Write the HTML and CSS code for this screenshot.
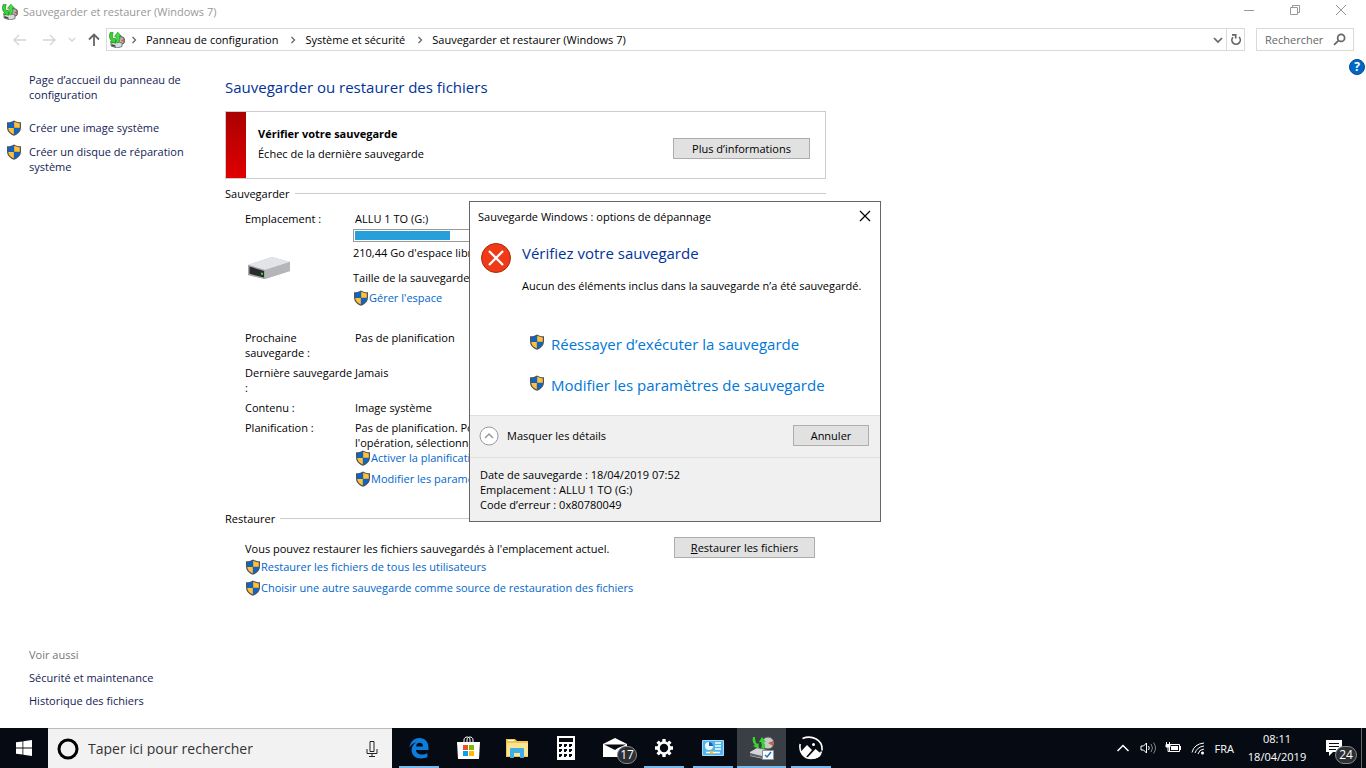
FILE: index.html
```html
<!DOCTYPE html>
<html lang="fr">
<head>
<meta charset="utf-8">
<title>Sauvegarder et restaurer (Windows 7)</title>
<link rel="stylesheet" href="styles.css">
</head>
<body>
<svg class="defs" aria-hidden="true">
  <symbol id="shield" viewBox="0 0 16 16">
    <path d="M8 .4C6 1.7 3.600 2.200 1 2.300v4.900C1 11.400 4 14.200 8 15.800c4-1.600 7-4.400 7-8.600V2.300C12.400 2.200 10 1.700 8 .4z" fill="#4f5357"/>
    <path d="M7.800 1.800C6.200 2.700 4.300 3.200 2.200 3.400v4.400h5.600z" fill="#0b66cb"/>
    <path d="M8.200 1.800c1.600.9 3.500 1.400 5.600 1.600v4.400H8.200z" fill="#ffc03c"/>
    <path d="M2.200 8.100c.3 3 2.600 5.200 5.600 6.500V8.100z" fill="#ffc03c"/>
    <path d="M13.800 8.100c-.3 3-2.600 5.200-5.600 6.500V8.100z" fill="#0b66cb"/>
  </symbol>
  <symbol id="backup" viewBox="0 0 16 16">
    <circle cx="11.800" cy="8.500" r="3.900" fill="#b4b8bb" stroke="#505457"/>
    <path d="M12 8.500l3.200-2v4z" fill="#d8583c"/>
    <path d="M2 11l5-2 6 2v3.500L8 16l-6-2z" fill="#d9dcde" stroke="#5d6164" stroke-width=".8"/>
    <path d="M2.500 12l4 1.500V15l-4-1.200z" fill="#3c4144"/>
    <path d="M1.200.5C-.3 4 .6 7 2.500 8.800L1 10.200l6 1-.8-5.600-1.500 1.500C3.400 5.700 3.200 3 4.200.6z" fill="#35d52d" stroke="#15791a" stroke-width=".6"/>
    <path d="M9 11c2-2.300 2.200-5 1.500-7h1.800L8.800.3 5.500 4.300h1.900c.7 2.200.4 4-.6 5.500z" fill="#43e33a" stroke="#15791a" stroke-width=".6"/>
  </symbol>
  <symbol id="crumb" viewBox="0 0 6 8"><path d="M1.500 1l3 3-3 3" fill="none" stroke="#666" stroke-width="1.300"/></symbol>
</svg>

<header class="titlebar">
  <svg class="i16"><use href="#backup"/></svg>
  <span class="title">Sauvegarder et restaurer (Windows 7)</span>
  <button class="winbtn" aria-label="Réduire"><svg viewBox="0 0 12 12"><path d="M1 6.500h10"/></svg></button>
  <button class="winbtn" aria-label="Restaurer"><svg viewBox="0 0 12 12"><path d="M1.500 3.500h7v7h-7zM3.500 3.500v-2h7v7h-2"/></svg></button>
  <button class="winbtn" aria-label="Fermer"><svg viewBox="0 0 12 12"><path d="M1 1l10 10M11 1L1 11"/></svg></button>
</header>

<nav class="navbar">
  <button class="nb" aria-label="Précédent"><svg class="i16 pale" viewBox="0 0 16 16"><path d="M14 8H2M7 3L2 8l5 5"/></svg></button>
  <button class="nb" aria-label="Suivant"><svg class="i16 pale" viewBox="0 0 16 16"><path d="M2 8h12M9 3l5 5-5 5"/></svg></button>
  <button class="nb small" aria-label="Pages récentes"><svg class="i16 pale" viewBox="0 0 16 16"><path d="M5 6l3 3 3-3"/></svg></button>
  <button class="nb up" aria-label="Dossier parent"><svg class="i16" viewBox="0 0 16 16"><path d="M8 14V2.500M3 7.500l5-5 5 5"/></svg></button>
  <div class="address">
    <svg class="i16"><use href="#backup"/></svg>
    <svg class="sep first"><use href="#crumb"/></svg><a href="#">Panneau de configuration</a>
    <svg class="sep"><use href="#crumb"/></svg><a href="#">Système et sécurité</a>
    <svg class="sep"><use href="#crumb"/></svg><a href="#">Sauvegarder et restaurer (Windows 7)</a>
    <button class="drop" aria-label="Historique"><svg viewBox="0 0 12 12"><path d="M2 4l4 4 4-4"/></svg></button>
    <button class="refresh" aria-label="Actualiser"><svg viewBox="0 0 12 12"><path d="M3 3.200A4.200 4.200 0 1 0 9 3M2 .8h3.700v3.700"/></svg></button>
  </div>
  <label class="search"><input type="text" placeholder="Rechercher" aria-label="Rechercher"><svg viewBox="0 0 12 12"><circle cx="7.500" cy="4.500" r="3.200"/><path d="M5 7L1 11"/></svg></label>
</nav>

<div class="content">
  <aside class="side">
    <a class="home" href="#">Page d’accueil du panneau de configuration</a>
    <a class="task" href="#"><svg class="i16"><use href="#shield"/></svg><span>Créer une image système</span></a>
    <a class="task" href="#"><svg class="i16"><use href="#shield"/></svg><span>Créer un disque de réparation<br>système</span></a>
    <div class="also"><span>Voir aussi</span><a href="#">Sécurité et maintenance</a><a href="#">Historique des fichiers</a></div>
  </aside>

  <main class="main">
    <h1>Sauvegarder ou restaurer des fichiers</h1>
    <section class="alert">
      <div class="alert-text"><strong>Vérifier votre sauvegarde</strong><span>Échec de la dernière sauvegarde</span></div>
      <button class="btn more">Plus d’informations</button>
    </section>

    <h2>Sauvegarder</h2>
    <div class="row location">
      <div class="label">Emplacement :
        <svg class="drive" viewBox="0 0 44 24">
          <path d="M1 9L25 1l18 5v9L18 23 1 19z" fill="#b9babd"/>
          <path d="M1 9L25 1l18 5-25 8z" fill="#e3e4e8"/>
          <path d="M18 14l25-8v9l-25 8z" fill="#b5b6b9"/>
          <path d="M1 9l17 5v9L1 19z" fill="#a4a6a8"/>
          <path d="M2.500 10.500L17 15v6.500L2.500 17.800z" fill="#292c2e"/>
          <path d="M14 16.500l2 .5v2l-2-.4z" fill="#35e52d"/>
        </svg>
      </div>
      <div class="space">
        <span class="drive-name">ALLU 1 TO (G:)</span>
        <div class="meter"><div class="meter-fill"></div></div>
        <span>210,44 Go d'espace libre</span>
        <span class="size">Taille de la sauvegarde</span>
        <a class="link" href="#"><svg class="i16"><use href="#shield"/></svg>Gérer l'espace</a>
      </div>
    </div>
    <div class="row"><div class="label">Prochaine<br>sauvegarde :</div><div>Pas de planification</div></div>
    <div class="row"><div class="label">Dernière sauvegarde<br>:</div><div>Jamais</div></div>
    <div class="row"><div class="label">Contenu :</div><div>Image système</div></div>
    <div class="row plan"><div class="label">Planification :</div>
      <div>Pas de planification. Pour<br>l'opération, sélectionnez
        <a class="link" href="#"><svg class="i16"><use href="#shield"/></svg>Activer la planification</a>
        <a class="link" href="#"><svg class="i16"><use href="#shield"/></svg>Modifier les paramètres</a>
      </div>
    </div>

    <h2>Restaurer</h2>
    <div class="restore">
      <div class="restore-text">
        <span>Vous pouvez restaurer les fichiers sauvegardés à l'emplacement actuel.</span>
        <a class="link" href="#"><svg class="i16"><use href="#shield"/></svg>Restaurer les fichiers de tous les utilisateurs</a>
        <a class="link" href="#"><svg class="i16"><use href="#shield"/></svg>Choisir une autre sauvegarde comme source de restauration des fichiers</a>
      </div>
      <button class="btn restore-btn"><u>R</u>estaurer les fichiers</button>
    </div>
  </main>
  <button class="help" aria-label="Aide">?</button>
</div>

<section class="dialog" role="dialog" aria-labelledby="dlg-title">
  <div class="dlg-head"><span id="dlg-title">Sauvegarde Windows : options de dépannage</span>
    <button aria-label="Fermer"><svg viewBox="0 0 12 12"><path d="M1 1l10 10M11 1L1 11"/></svg></button></div>
  <div class="dlg-body">
    <svg class="error" viewBox="0 0 30 30"><circle cx="15" cy="15" r="14.500" fill="#f03a17" stroke="#a82a12"/><path d="M8 8l14 14M22 8L8 22" stroke="#fff" stroke-width="2.300"/></svg>
    <div class="dlg-text">
      <h2>Vérifiez votre sauvegarde</h2>
      <p>Aucun des éléments inclus dans la sauvegarde n’a été sauvegardé.</p>
      <a href="#"><svg class="i16"><use href="#shield"/></svg>Réessayer d’exécuter la sauvegarde</a>
      <a href="#"><svg class="i16"><use href="#shield"/></svg>Modifier les paramètres de sauvegarde</a>
    </div>
  </div>
  <div class="dlg-foot">
    <button class="toggle"><svg viewBox="0 0 20 20"><circle cx="10" cy="10" r="9" fill="#fff" stroke="#999"/><path d="M6 12l4-4 4 4" fill="none" stroke="#999" stroke-width="1.500"/></svg>Masquer les détails</button>
    <button class="btn cancel">Annuler</button>
  </div>
  <div class="dlg-details">Date de sauvegarde : 18/04/2019 07:52<br>Emplacement : ALLU 1 TO (G:)<br>Code d’erreur : 0x80780049</div>
</section>

<footer class="taskbar">
  <button class="start" aria-label="Démarrer"><svg viewBox="0 0 16 16"><path d="M0 2.300L6.500 1.400v6.200H0zM7.300 1.300L16 0v7.600H7.300zM0 8.400h6.500v6.200L0 13.700zM7.300 8.400H16V16l-8.700-1.300z" fill="#fff"/></svg></button>
  <label class="cortana">
    <svg class="ring" viewBox="0 0 22 22"><circle cx="11" cy="11" r="9" fill="none" stroke="#000" stroke-width="3"/></svg>
    <input type="text" placeholder="Taper ici pour rechercher" aria-label="Taper ici pour rechercher">
    <svg class="mic" viewBox="0 0 12 16"><path d="M4 .5h4v10H4zM1 8v4.500h10V8M6 12.500v3M3 15.500h6" fill="none" stroke="#222"/></svg>
  </label>
  <div class="apps">
    <button class="app run" aria-label="Edge"><svg viewBox="0 0 24 24"><path d="M2.500 11.500C3.200 6 7 2 12.200 2 18 2 21.500 6 21.500 11.500V14H9c.2 3 2.800 4.500 5.800 4.500 2.200 0 4.100-.7 5.600-1.600v4.200C18.600 22.200 16.300 22.500 14 22.500c-5.600 0-9.400-3.500-9.400-8.500 0-3.300 1.800-6 4.600-7.500C6.400 6.800 4.200 8.800 2.500 11.500zM9 10.500h7c0-2.300-1.100-3.800-3.400-3.800-2.100 0-3.400 1.600-3.600 3.800z" fill="#0c7ddb"/></svg></button>
    <button class="app" aria-label="Store"><svg viewBox="0 0 24 24"><path d="M8 7V4c0-4 6-4 6 0v3M11 7V4c0-4 6-4 6 0v3" fill="none" stroke="#fff"/><path d="M1 6h23l-1 17H2z" fill="#fff"/><path d="M7 9h5v5H7z" fill="#f25022"/><path d="M13 9h5v5h-5z" fill="#7fba00"/><path d="M7 15h5v5H7z" fill="#00a4ef"/><path d="M13 15h5v5h-5z" fill="#ffb900"/></svg></button>
    <button class="app" aria-label="Explorateur"><svg viewBox="0 0 24 24"><path d="M1 3h9l2 2h11v16H1z" fill="#f1c44e"/><path d="M2 7h21v13H2z" fill="#ffe394"/><path d="M3 4h6v1H3z" fill="#fff"/><path d="M5 22v-9q0-1 1-1h12q1 0 1 1v9h-4v-5H9v5z" fill="#3daee6"/></svg></button>
    <button class="app" aria-label="Calculatrice"><svg viewBox="0 0 24 24"><path d="M3 0h18v24H3z" fill="#fff"/><path d="M5 2h14v4H5zM5 8h3v2H7v1H5zM10 8h3v2h-1v1h-2zM15 8h3v2h-1v1h-2zM5 13h3v2H7v1H5zM10 13h3v2h-1v1h-2zM15 13h3v2h-1v1h-2zM5 18h3v2H7v1H5zM10 18h3v2h-1v1h-2zM15 18h3v2h-1v1h-2z" fill="#060b13"/></svg></button>
    <button class="app mail" aria-label="Courrier"><svg viewBox="0 0 24 24"><path d="M0 8l12-6 12 6v13H0z" fill="#fff"/><path d="M1 8.500h22L15 12l-3 2z" fill="#060b13"/></svg><span class="badge">17</span></button>
    <button class="app run" aria-label="Paramètres"><svg viewBox="0 0 24 24" fill="none" stroke="#fff"><circle cx="12" cy="12" r="5.500" stroke-width="2.600"/><path d="M12 3v3M12 18v3M3 12h3M18 12h3M5.600 5.600l2 2M16.400 16.400l2 2M5.600 18.400l2-2M16.400 7.600l2-2" stroke-width="3.400"/></svg></button>
    <button class="app run" aria-label="Panneau de configuration"><svg viewBox="0 0 24 24"><path d="M1.500 4.500h21v15h-21z" fill="#4eb5ed" stroke="#a7dcf8"/><circle cx="8" cy="10" r="4" fill="#eef8fe"/><path d="M8 10V6a4 4 0 0 1 4 4z" fill="#1669b0"/><path d="M14 7h6M14 10h6M14 13h6M5 16.500h14" stroke="#fff" stroke-width="1.500"/><path d="M9 15h3v3H9z" fill="#ffb52c"/></svg></button>
    <button class="app run active" aria-label="Sauvegarder et restaurer"><svg viewBox="0 0 24 24"><circle cx="18" cy="7" r="6" fill="#c7cacd" stroke="#595d60"/><path d="M18 7l5-2v5z" fill="#d8583c"/><path d="M0 16l7-4 16 3v5l-9 3-14-3z" fill="#d2d5d7"/><path d="M0 17l12 3v2L0 19.500z" fill="#5c6064"/><path d="M3 1c-1 4 0 6 2 8l-2 1 6 3-.5-6-1.500 1C5.500 6 5 4 5 1z" fill="#35d52d"/><path d="M14 13c2-2 1-5 0-7h2l-4-5-3 5h2c1 3 1 4 0 6z" fill="#35d52d"/><path d="M12.500 14.500h11v9h-11z" fill="#f7f9fb" stroke="#8b9298"/><path d="M15 19l2 2 4-5" fill="none" stroke="#2075bd" stroke-width="1.500"/></svg></button>
    <button class="app run" aria-label="Photos"><svg viewBox="0 0 24 24"><path d="M3.500 2.500C13-1.500 24 4 23 14.500M1.200 8C-.5 16 5 22.500 12 22.500c5 0 9-2.500 10.500-7" fill="none" stroke="#fff" stroke-width="1.600"/><path d="M1.500 16L8 9l5 5-6 7c-2.500-1-4.500-2.500-5.500-5z" fill="#fff"/><path d="M8.500 21.500l8-8.500 6 5c-3 5-9 6-14 3.500z" fill="#fff"/><circle cx="14.500" cy="8.500" r="1.500" fill="#fff"/></svg></button>
  </div>
  <div class="tray">
    <svg class="i16 bold" viewBox="0 0 16 16"><path d="M2.500 11L8 5.500l5.500 5.500"/></svg>
    <svg class="i16" viewBox="0 0 16 16"><path d="M1 6h2.500l3-3v10l-3-3H1z"/><path d="M8.500 6q1.500 2 0 4"/><path d="M11 4q3 4 0 8M13.500 2.500q4 5.500 0 11" opacity=".5"/></svg>
    <svg class="i16" viewBox="0 0 16 16"><path d="M4.500 4.500h10v7h-10z"/><path d="M6 6h7v4H6zM14.500 6H16v4h-1.500z" fill="#fff" stroke="none"/><path d="M1 4.500h4v2.500H1z" fill="#fff"/><path d="M1.500 2v2M4.500 2v2M3 7v4.500h1.500"/></svg>
    <svg class="i16" viewBox="0 0 16 16"><path d="M2 12.500Q4 4 14 3M5 13q2-6 9-7M8 14q1-4.500 6-5"/><circle cx="12.500" cy="13" r="1.500" fill="#fff" stroke="none"/></svg>
    <span>FRA</span>
    <time>08:11<br>18/04/2019</time>
    <button class="notif" aria-label="Notifications"><svg viewBox="0 0 18 18"><path d="M1 1h16v12H8l-4 4v-4H1z" fill="#fff"/><path d="M4 4.500h10M4 7.500h10M4 10.500h7" stroke="#060b13"/></svg><span class="badge">24</span></button>
  </div>
</footer>
</body>
</html>
```
FILE: styles.css
```css
* { box-sizing: border-box; }
body {
  margin: 0;
  min-height: 100vh;
  display: flex;
  flex-direction: column;
  position: relative;
  background: #fff;
  color: #000;
  font: 11px/15px "Open Sans", "Noto Sans", sans-serif;
}
button, input { font: inherit; color: inherit; }
button { margin: 0; padding: 0; border: 0; background: none; }
a { text-decoration: none; color: #0066cc; }
.defs { position: absolute; width: 0; height: 0; }
.i16 { width: 16px; height: 16px; flex: none; }
h1, h2 { margin: 0; font-weight: 400; }

.titlebar { display: flex; align-items: center; height: 23px; padding: 0 2px; color: #999; }
.title { flex: 1; padding-left: 5px; }
.winbtn { width: 46px; height: 20px; }
.winbtn svg { width: 12px; height: 12px; fill: none; stroke: #999; }

.navbar { display: flex; align-items: center; height: 33px; padding: 0 12px 0 5px; }
.nb { width: 29px; height: 20px; display: grid; place-items: center; fill: none; stroke: #666; stroke-width: 1.800; }
.nb.small { width: 18px; }
.nb.up { width: 25px; }
.pale { stroke: #d5d5d5; stroke-width: 1.400; }
.address { flex: 1; display: flex; align-items: center; height: 23px; border: 1px solid #d9d9d9; padding-left: 2px; }
.address a { color: #000; }
.sep { width: 6px; height: 8px; margin: 0 9px 0 12px; }
.sep.first { margin-left: 6px; }
.drop { margin-left: auto; width: 16px; }
.refresh { width: 18px; height: 21px; border-left: 1px solid #d9d9d9; }
.drop, .refresh { display: grid; place-items: center; }
.drop svg, .refresh svg { width: 12px; height: 12px; fill: none; stroke: #666; stroke-width: 1.700; }
.search { display: flex; align-items: center; width: 98px; height: 23px; margin-left: 11px; padding: 0 7px 0 8px; border: 1px solid #d9d9d9; }
.search input { flex: 1; min-width: 0; padding: 0; border: 0; background: none; }
.search input::placeholder { color: #666; opacity: 1; }
.search svg { width: 13px; height: 13px; flex: none; fill: none; stroke: #666; stroke-width: 1.600; }

.content { flex: 1; display: flex; align-items: stretch; }
.side { width: 225px; display: flex; flex-direction: column; padding: 16px 20px 20px 6px; }
.side a { color: #151c55; }
.home { max-width: 170px; margin: 0 0 18px 23px; }
.task { display: flex; gap: 7px; margin-bottom: 8px; }
.side .also { display: flex; flex-direction: column; gap: 8px; margin-top: auto; padding-left: 23px; color: #777; }

.main { width: 601px; padding-top: 21px; }
h1 { font-size: 15px; line-height: 20px; color: #003399; }
.alert { display: flex; align-items: center; justify-content: space-between; height: 68px; margin: 14px 0 7px; padding: 0 15px 0 12px; border: 1px solid #ccc; }
.alert::before { content: ""; align-self: stretch; width: 20px; margin: 0 12px 0 -12px; background: linear-gradient(#aa0000, #e00000); }
.alert-text { flex: 1; display: flex; flex-direction: column; gap: 5px; padding-bottom: 3px; }
.btn { height: 21px; border: 1px solid #adadad; background: #e1e1e1; }
.more { width: 137px; margin-top: 6px; }
.main h2 { display: flex; align-items: center; gap: 5px; font-size: 11px; line-height: 15px; }
.main h2::after { content: ""; flex: 1; height: 1px; background: #ccc; }
.row { display: flex; margin: 0 0 5px 20px; white-space: nowrap; }
.label { width: 110px; flex: none; }
.location { margin-top: 10px; margin-bottom: 25px; }
.drive { display: block; width: 44px; height: 24px; margin: 30px 0 0 2px; }
.space { flex: 1; display: flex; flex-direction: column; margin-left: -2px; }
.drive-name { padding-left: 2px; }
.meter { width: 220px; height: 13px; margin: 3px 0; padding: 1px; border: 1px solid #999; }
.meter-fill { width: 95px; height: 9px; background: #26a0da; }
.size { margin: 10px 0 5px; }
.link { display: flex; align-items: center; height: 15px; }
.plan { margin-bottom: 25px; }
.plan .link + .link { margin-top: 6px; }
.restore { display: flex; justify-content: space-between; margin: 11px 11px 0 20px; }
.restore-text { display: flex; flex-direction: column; padding-top: 4px; white-space: nowrap; }
.restore-text .link { margin: 3px 0; }
.restore-btn { width: 141px; }
.help { width: 16px; height: 16px; margin: 3px 1px 0 auto; border-radius: 50%; background: #0067c5; border: 1px solid #004b91; color: #fff; font-size: 12px; font-weight: 700; line-height: 14px; }

.dialog { position: absolute; left: 469px; top: 201px; width: 412px; background: #fff; border: 1px solid #666; }
.dlg-head { display: flex; align-items: center; justify-content: space-between; height: 28px; padding: 0 9px 0 8px; }
.dlg-head svg { display: block; width: 12px; height: 12px; fill: none; stroke: #000; stroke-width: 1.200; }
.dlg-body { display: flex; gap: 11px; height: 185px; padding: 12px 0 0 11px; }
.error { width: 30px; height: 30px; flex: none; margin-top: 1px; }
.dlg-text { white-space: nowrap; }
.dlg-text h2 { font-size: 15px; line-height: 22px; color: #003399; }
.dlg-text p { margin: 14px 0 40px; }
.dlg-text a { display: flex; align-items: center; gap: 6px; height: 21px; margin: 0 0 20px 7px; color: #0078d7; font-size: 15px; line-height: 20px; }
.dlg-text a svg { margin-top: -3px; }
.dlg-foot { display: flex; align-items: center; justify-content: space-between; height: 42px; padding: 0 11px 2px 9px; background: #f0f0f0; border-top: 1px solid #dfdfdf; }
.toggle { display: flex; align-items: center; gap: 8px; }
.toggle svg { width: 20px; height: 20px; }
.cancel { width: 76px; }
.dlg-details { padding: 9px 10px; background: #f0f0f0; border-top: 1px solid #dfdfdf; }

.taskbar { display: flex; height: 40px; background: #060b13; color: #fff; }
.start { width: 48px; display: grid; place-items: center; }
.start svg { width: 16px; height: 16px; }
.cortana { display: flex; align-items: center; width: 344px; padding: 0 13px 0 9px; background: #f2f2f2; border-top: 1px solid #bbb; }
.ring { width: 22px; height: 22px; margin-right: 9px; }
.cortana input { flex: 1; padding: 0; border: 0; background: none; font-size: 14px; }
.cortana input::placeholder { color: #333; opacity: 1; }
.mic { width: 14px; height: 16px; }
.apps { display: flex; margin-left: 2px; }
.app { position: relative; width: 49px; display: grid; place-items: center; }
.app svg { width: 24px; height: 24px; }
.run::after { content: ""; position: absolute; left: 5px; right: 4px; bottom: 0; height: 2px; background: #76b9ed; }
.active { background: #3a3f46; }
.active::after { left: 0; right: 0; }
.badge { position: absolute; width: 20px; height: 18px; border: 1px solid #888; border-radius: 9px; background: #2c2f33; font-size: 12px; line-height: 16px; text-align: center; }
.app .badge { left: 27px; top: 18px; }
.tray { display: flex; align-items: center; margin-left: auto; gap: 9px; padding-right: 4px; }
.tray > svg { fill: none; stroke: #fff; }
.tray .bold { stroke-width: 1.500; }
.tray time { width: 68px; line-height: 18px; text-align: center; }
.notif { position: relative; width: 42px; height: 40px; display: grid; place-items: center; border-right: 1px solid #666; }
.notif svg { width: 18px; height: 18px; margin-right: 14px; }
.notif .badge { left: 15px; top: 18px; width: 22px; }
```
